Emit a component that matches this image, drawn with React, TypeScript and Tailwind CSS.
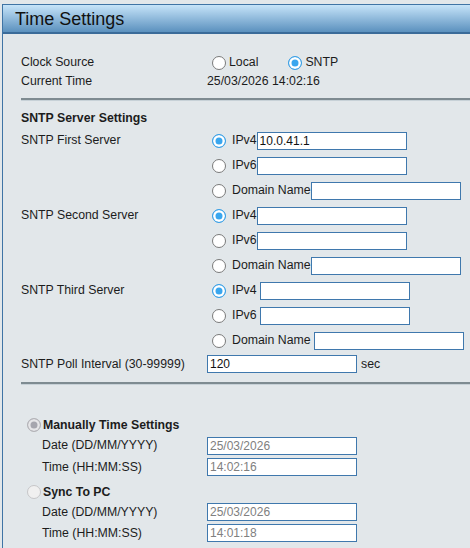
import { ReactNode } from 'react';

type RadioProps = {
  name: string;
  checked?: boolean;
  disabled?: boolean;
  className?: string;
};

function Radio({ name, checked, disabled, className = '' }: RadioProps) {
  let look = 'border-[#7a7a7a] bg-white checked:border-[#3a9fe5] checked:bg-[#3aa6ee] checked:shadow-[inset_0_0_0_2.5px_#ffffff]';
  if (disabled) {
    look = checked
      ? 'border-[#b4b4b8] bg-[#a6a6ae] shadow-[inset_0_0_0_2.5px_#e6e6e8]'
      : 'border-[#c6c6c8] bg-[#f0f0f0]';
  }
  return (
    <input
      type="radio"
      name={name}
      defaultChecked={checked}
      disabled={disabled}
      className={`m-0 h-[14px] w-[14px] shrink-0 appearance-none rounded-full border ${look} ${className}`}
    />
  );
}

function TextBox({ value = '', disabled, className = '' }: { value?: string; disabled?: boolean; className?: string }) {
  return (
    <input
      type="text"
      defaultValue={value}
      disabled={disabled}
      className={`h-[18px] w-[150px] border border-[#3f78ad] bg-white px-[2px] text-[12px] outline-none ${
        disabled ? 'text-[#808080]' : 'text-[#111]'
      } ${className}`}
    />
  );
}

function ServerRow({ label, name, kind, value, spaced }: { label?: string; name: string; kind: string; value?: string; spaced?: boolean }) {
  return (
    <div className="flex h-[25px] items-center">
      <div className="w-[186px] shrink-0">{label}</div>
      <Radio name={name} checked={kind === 'IPv4'} className="ml-[5px]" />
      <span className="ml-[6px]">{kind}</span>
      <TextBox value={value} className={spaced ? 'ml-[3px]' : ''} />
    </div>
  );
}

function Divider({ className = '' }: { className?: string }) {
  return <div className={`h-[3px] border-t-2 border-b border-t-[#7e8b91] border-b-[#c7d1d7] ${className}`} />;
}

function Line({ label, children, className = '' }: { label: ReactNode; children?: ReactNode; className?: string }) {
  return (
    <div className={`flex items-center ${className}`}>
      <div className="w-[186px] shrink-0">{label}</div>
      {children}
    </div>
  );
}

export default function App() {
  const servers = [
    { label: 'SNTP First Server', name: 's1', value: '10.0.41.1', spaced: false },
    { label: 'SNTP Second Server', name: 's2', value: '', spaced: false },
    { label: 'SNTP Third Server', name: 's3', value: '', spaced: true },
  ];

  return (
    <main className="min-h-screen bg-[#e2e7ea] pl-[2px] pt-[4px] font-['Liberation_Sans',Arial,sans-serif] text-[12.3px] text-[#1c1c1c]">
      <div className="min-h-[544px] border-l border-t border-[#3f74a5]">
        <div className="flex h-[29px] items-center border-b-2 border-[#3a6b99] bg-gradient-to-b from-[#c6e4f9] to-[#5b91be] pl-[12px]">
          <h1 className="text-[18px] leading-none text-[#111]">Time Settings</h1>
        </div>

        <div className="pl-[18px]">
          <Line label="Clock Source" className="mt-[19px] h-[19px]">
            <Radio name="clock" className="ml-[5px]" />
            <span className="ml-[3px]">Local</span>
            <Radio name="clock" checked className="ml-[30px]" />
            <span className="ml-[3px]">SNTP</span>
          </Line>
          <Line label="Current Time" className="h-[18px]">
            <span>25/03/2026 14:02:16</span>
          </Line>

          <Divider className="mt-[8px]" />

          <div className="mt-[7px] flex h-[20px] items-center font-bold">SNTP Server Settings</div>

          {servers.map((s) => (
            <div key={s.name}>
              <ServerRow label={s.label} name={s.name} kind="IPv4" value={s.value} spaced={s.spaced} />
              <ServerRow name={s.name} kind="IPv6" spaced={s.spaced} />
              <ServerRow name={s.name} kind="Domain Name" spaced={s.spaced} />
            </div>
          ))}

          <Line label="SNTP Poll Interval (30-99999)" className="h-[22px]">
            <TextBox value="120" />
            <span className="ml-[4px]">sec</span>
          </Line>

          <Divider className="mt-[7px]" />

          <div className="mt-[30px] flex h-[20px] items-center">
            <Radio name="manual" checked disabled className="ml-[6px]" />
            <span className="ml-[2px] font-bold">Manually Time Settings</span>
          </div>
          <Line label={<span className="pl-[21px]">Date (DD/MM/YYYY)</span>} className="h-[21px]">
            <TextBox value="25/03/2026" disabled />
          </Line>
          <Line label={<span className="pl-[21px]">Time (HH:MM:SS)</span>} className="h-[22px]">
            <TextBox value="14:02:16" disabled />
          </Line>

          <div className="mt-[4px] flex h-[20px] items-center">
            <Radio name="manual" disabled className="ml-[6px]" />
            <span className="ml-[2px] font-bold">Sync To PC</span>
          </div>
          <Line label={<span className="pl-[21px]">Date (DD/MM/YYYY)</span>} className="h-[20px]">
            <TextBox value="25/03/2026" disabled />
          </Line>
          <Line label={<span className="pl-[21px]">Time (HH:MM:SS)</span>} className="h-[22px]">
            <TextBox value="14:01:18" disabled />
          </Line>
        </div>
      </div>
    </main>
  );
}
